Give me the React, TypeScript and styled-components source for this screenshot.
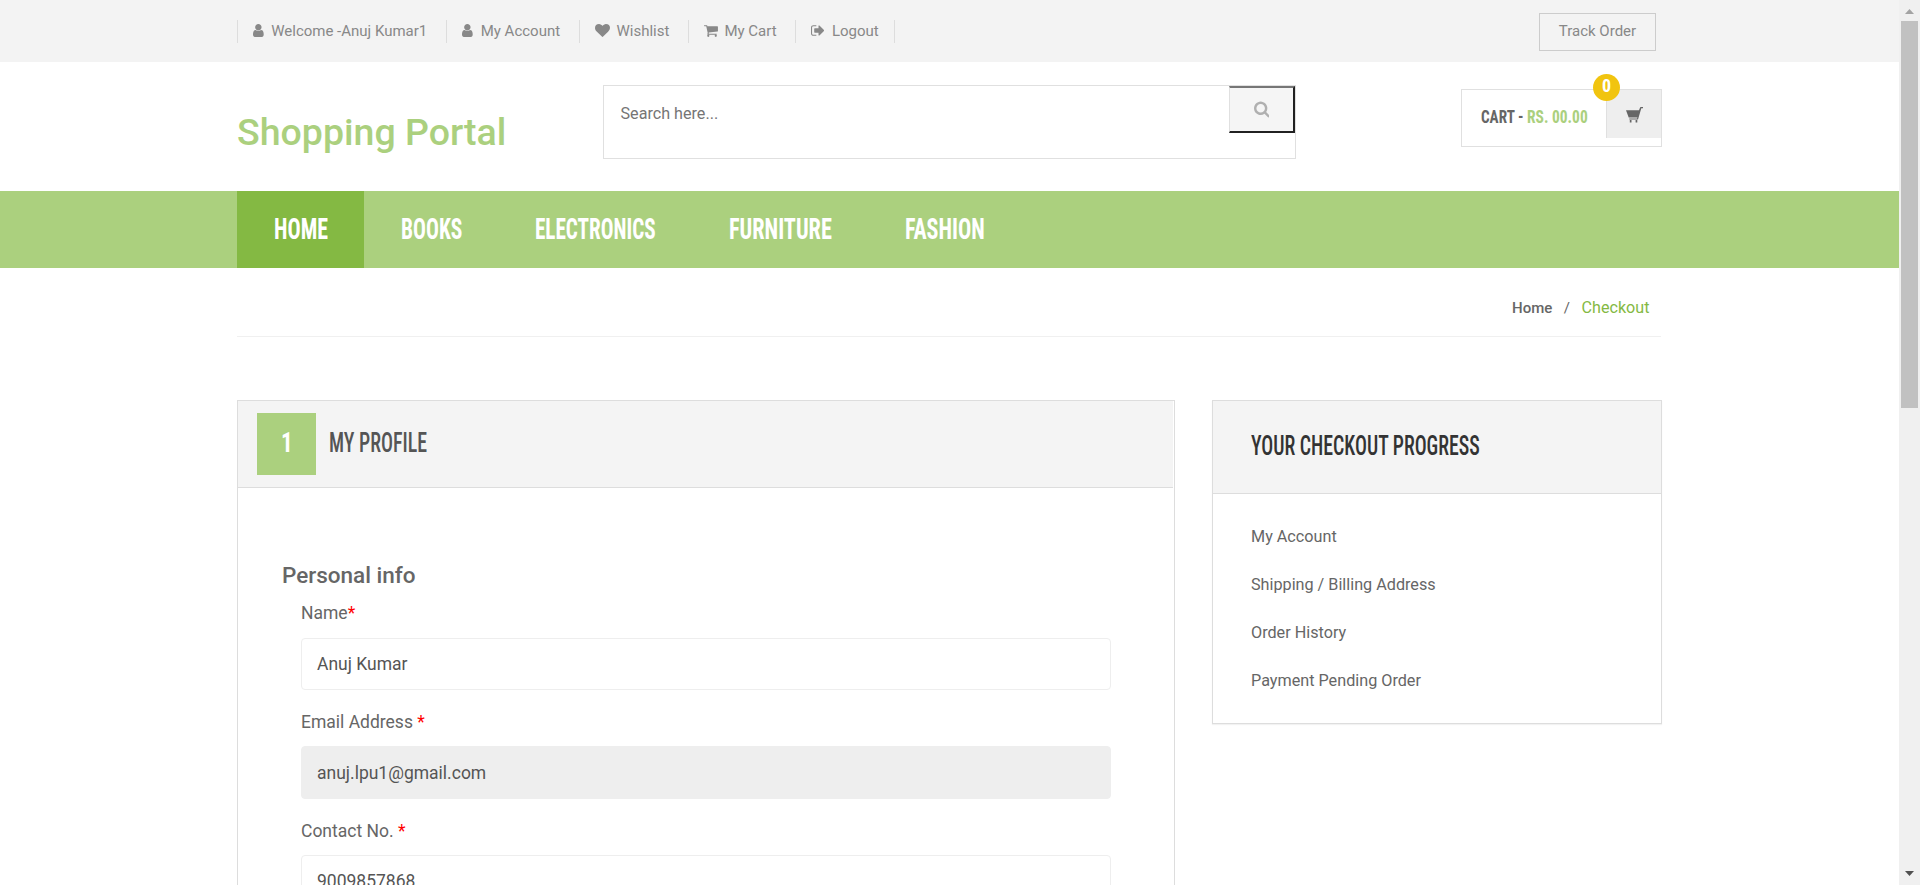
import React, { useLayoutEffect, useRef, useState } from "react";
import styled, { createGlobalStyle } from "styled-components";

const GlobalStyle = createGlobalStyle`
  *, *::before, *::after { box-sizing: border-box; }
  body { margin: 0; background: #fff; color: #666; font-family: Roboto, "Liberation Sans", sans-serif; overflow: hidden; }
  h2, h3 { margin: 0; font-weight: 500; }
  ul { margin: 0; padding: 0; list-style: none; }
`;

const Shell = styled.div`
  display: flex;
  width: 1920px;
  height: 885px;
  overflow: hidden;
`;
const Page = styled.div`
  flex: 1;
  height: 885px;
  overflow: hidden;
`;
const Container = styled.div`
  width: 1425px;
  margin-left: 237px;
  display: flex;
`;

/* Condensed display type, fitted to a set width */
const FitBox = styled.span<{ $w: number }>`
  display: inline-block;
  width: ${(p) => p.$w}px;
  white-space: nowrap;
`;
const FitText = styled.span<{ $size: number; $weight: number }>`
  display: inline-block;
  font-family: Roboto, "Liberation Sans", sans-serif;
  font-stretch: 75%;
  font-size: ${(p) => p.$size}px;
  font-weight: ${(p) => p.$weight};
  transform-origin: 0 50%;
`;
function Condensed({ w, size, weight = 700, children }: { w: number; size: number; weight?: number; children: string }) {
  const ref = useRef<HTMLSpanElement>(null);
  const [scale, setScale] = useState(1);
  useLayoutEffect(() => {
    if (ref.current) setScale(w / ref.current.offsetWidth);
  }, [w, size, weight, children]);
  return (
    <FitBox $w={w}>
      <FitText ref={ref} $size={size} $weight={weight} style={{ transform: `scaleX(${scale})` }}>
        {children}
      </FitText>
    </FitBox>
  );
}

const TopBar = styled.div`
  height: 62px;
  background: #f3f3f3;
`;
const TopInner = styled(Container)`
  height: 62px;
  align-items: center;
  justify-content: space-between;
  padding-right: 6px;
`;
const TopLinks = styled.ul`
  display: flex;
  margin-top: 1px;
  border-left: 1px solid #ddd;
`;
const TopLink = styled.li<{ $w: number; $gap: number }>`
  display: flex;
  align-items: center;
  gap: ${(p) => p.$gap}px;
  width: ${(p) => p.$w}px;
  height: 23px;
  padding: 0 0 2px 15px;
  border-right: 1px solid #ddd;
  font-size: 15px;
  line-height: 22px;
  color: #888;
  white-space: nowrap;
`;
const TrackButton = styled.a`
  width: 117px;
  height: 38px;
  margin-top: 2px;
  border: 1px solid #ccc;
  font-size: 15px;
  line-height: 34px;
  text-align: center;
  color: #888;
`;

const Header = styled(Container)`
  height: 129px;
`;
const Logo = styled.h2`
  width: 366px;
  margin-top: 50px;
  font-size: 37.5px;
  line-height: 40px;
  color: #abd07e;
`;
const SearchBox = styled.div`
  display: flex;
  justify-content: space-between;
  width: 693px;
  height: 74px;
  margin-top: 23px;
  padding-left: 16.5px;
  border: 1px solid #e0e0e0;
  font-size: 16.150px;
  line-height: 55px;
  color: #757575;
`;
const SearchButton = styled.button`
  display: flex;
  align-items: center;
  justify-content: center;
  width: 66px;
  height: 47px;
  padding: 0;
  background: #f5f5f5;
  border-style: solid;
  border-width: 2px 2px 2px 1px;
  border-color: #767676 #212121 #212121 #e0e0e0;
  color: #b0b0b0;
`;
const Cart = styled.div`
  position: relative;
  display: flex;
  justify-content: space-between;
  width: 201px;
  height: 58px;
  margin: 27px 0 0 165px;
  padding-left: 19px;
  border: 1px solid #e0e0e0;
`;
const CartText = styled.div`
  display: flex;
  gap: 4px;
  line-height: 54px;
  color: #666;
`;
const Price = styled.span`
  color: #abd07e;
`;
const CartButton = styled.div`
  width: 55px;
  height: 48px;
  padding: 17px 0 0 18.5px;
  background: #eee;
  border-left: 1px solid #e0e0e0;
`;
const Badge = styled.span`
  position: absolute;
  top: -16px;
  left: 131px;
  width: 27px;
  height: 27px;
  border-radius: 50%;
  background: #f1c40f;
  color: #fff;
  line-height: 23px;
  text-align: center;
`;

const NavBar = styled.nav`
  height: 77px;
  background: #abd07e;
`;
const NavItem = styled.a<{ $active?: boolean }>`
  height: 77px;
  padding: 0 36.5px;
  line-height: 75px;
  color: #fff;
  background: ${(p) => (p.$active ? "#84b943" : "transparent")};
`;

const Breadcrumb = styled(Container)`
  width: 1424px;
  height: 69px;
  justify-content: flex-end;
  padding-right: 11.5px;
  border-bottom: 1px solid #f0f0f0;
  line-height: 79px;
  font-size: 16.150px;
  color: #84b943;
`;
const Crumb = styled.span`
  font-size: 15px;
  font-weight: 500;
  line-height: 80px;
  color: #666;
`;
const Slash = styled.span`
  margin: 0 11.5px;
  font-size: 15px;
  line-height: 80px;
  color: #666;
`;

const Main = styled(Container)`
  margin-top: 63px;
  align-items: flex-start;
  justify-content: space-between;
`;
const Profile = styled.section`
  width: 938px;
  height: 600px;
  border: 1px solid #ddd;
  padding-right: 1px;
`;
const ProfileHead = styled.div`
  display: flex;
  height: 87px;
  padding: 12px 0 0 19px;
  background: #f4f4f4;
  border-bottom: 1px solid #ddd;
  line-height: 61px;
  color: #555;
`;
const Step = styled.span`
  width: 59px;
  height: 62px;
  margin-right: 13px;
  background: #abd07e;
  color: #fff;
  text-align: center;
`;
const Form = styled.div`
  padding: 71px 62px 0 63px;
`;
const FormTitle = styled.h3`
  margin-left: -19px;
  font-size: 22.5px;
  line-height: 32px;
`;
const Label = styled.div<{ $gap: number; $h?: number }>`
  margin-top: ${(p) => p.$gap}px;
  height: ${(p) => p.$h ?? 37}px;
  font-size: 17.5px;
  line-height: 26px;
`;
const Required = styled.span`
  color: red;
`;
const Field = styled.div<{ $disabled?: boolean }>`
  height: ${(p) => (p.$disabled ? 53 : 52)}px;
  padding-left: 15px;
  border: 1px solid #eee;
  border-radius: 4px;
  background: ${(p) => (p.$disabled ? "#eee" : "#fff")};
  font-size: 17.5px;
  line-height: ${(p) => (p.$disabled ? 52 : 50)}px;
  color: #555;
`;

const Progress = styled.aside`
  width: 450px;
  height: 324px;
  border: 1px solid #ddd;
  box-shadow: 0 1px 1px rgba(0, 0, 0, 0.05);
`;
const ProgressHead = styled.div`
  height: 93px;
  padding-left: 38px;
  background: #f4f4f4;
  border-bottom: 1px solid #ddd;
  line-height: 91px;
  color: #333;
`;
const ProgressList = styled.ul`
  padding: 19px 0 0 38px;
  font-size: 16.200px;
  line-height: 48px;
`;

const ScrollTrack = styled.div`
  display: flex;
  flex-direction: column;
  align-items: center;
  width: 21px;
  height: 885px;
  background: #f0f0f0;
`;
const Thumb = styled.div`
  width: 17px;
  height: 387px;
  margin: 7px 0 463px;
  background: #c1c1c1;
`;
const Arrow = styled.svg`
  display: block;
  flex: none;
`;
const ArrowTop = styled(Arrow)`
  margin-top: 9px;
`;

const paths = {
  user: { box: "256 0 1280 1792", w: 1280, d: "M1536 1399q0 109-62.5 187t-150.5 78h-854q-88 0-150.5-78t-62.5-187q0-85 8.5-160.5t31.5-152 58.5-131 94-89 134.5-34.5q131 128 313 128t313-128q76 0 134.5 34.5t94 89 58.5 131 31.5 152 8.5 160.5zm-256-887q0 159-112.5 271.5t-271.5 112.5-271.5-112.5-112.5-271.5 112.5-271.5 271.5-112.5 271.5 112.5 112.5 271.5z" },
  heart: { box: "0 0 1792 1792", w: 1792, d: "M896 1664q-26 0-44-18l-624-602q-10-8-27.5-26t-55.5-65.5-68-97.5-53.5-121-23.5-138q0-220 127-344t351-124q62 0 126.5 21.5t120 58 95.5 68.5 76 68q36-36 76-68t95.5-68.5 120-58 126.5-21.5q224 0 351 124t127 344q0 221-229 450l-623 600q-18 18-44 18z" },
  cart: { box: "64 0 1664 1792", w: 1664, d: "M704 1536q0 52-38 90t-90 38-90-38-38-90 38-90 90-38 90 38 38 90zm896 0q0 52-38 90t-90 38-90-38-38-90 38-90 90-38 90 38 38 90zm128-1088v512q0 24-16.5 42.5t-40.5 21.5l-1044 122q13 60 13 70 0 16-24 64h920q26 0 45 19t19 45-19 45-45 19h-1024q-26 0-45-19t-19-45q0-11 8-31.5t16-36 21.5-40 15.5-29.5l-177-823h-204q-26 0-45-19t-19-45 19-45 45-19h256q16 0 28.5 6.5t19.5 15.5 13 24.5 8 26 5.5 29.5 4.5 26h1201q26 0 45 19t19 45z" },
  logout: { box: "64 0 1600 1792", w: 1600, d: "M704 1440q0 4 1 20t.5 26.5-3 23.5-10 19.5-20.5 6.5h-320q-119 0-203.5-84.5t-84.5-203.5v-704q0-119 84.5-203.5t203.5-84.5h320q13 0 22.5 9.5t9.5 22.5q0 4 1 20t.5 26.5-3 23.5-10 19.5-20.5 6.5h-320q-66 0-113 47t-47 113v704q0 66 47 113t113 47h312l11.5 1 11.5 3 8 5.5 7 9 2 13.5zm928-544q0 26-19 45l-544 544q-19 19-45 19t-45-19-19-45v-288h-448q-26 0-45-19t-19-45v-384q0-26 19-45t45-19h448v-288q0-26 19-45t45-19 45 19l544 544q19 19 19 45z" },
  search: { box: "64 64 1664 1792", w: 1664, d: "M1216 832q0-185-131.5-316.5t-316.5-131.5-316.5 131.5-131.5 316.5 131.5 316.5 316.5 131.5 316.5-131.5 131.5-316.5zm512 832q0 52-38 90t-90 38q-54 0-90-38l-343-342q-179 124-399 124-143 0-273.5-55.5t-225-150-150-225-55.5-273.5 55.5-273.5 150-225 225-150 273.5-55.5 273.5 55.5 225 150 150 225 55.5 273.5q0 220-124 399l343 343q37 37 37 90z" },
};
function Icon({ name, size = 15 }: { name: keyof typeof paths; size?: number }) {
  const p = paths[name];
  return (
    <svg width={(size * p.w) / 1792} height={size} viewBox={p.box} fill="currentColor">
      <path d={p.d} />
    </svg>
  );
}

const links: { icon: keyof typeof paths; text: string; w: number; gap: number }[] = [
  { icon: "user", text: "Welcome -Anuj Kumar1", w: 209, gap: 7.5 },
  { icon: "user", text: "My Account", w: 133, gap: 8 },
  { icon: "heart", text: "Wishlist", w: 109, gap: 6.5 },
  { icon: "cart", text: "My Cart", w: 107, gap: 6.5 },
  { icon: "logout", text: "Logout", w: 99, gap: 7.5 },
];
const nav: [string, number][] = [
  ["HOME", 54],
  ["BOOKS", 61.5],
  ["ELECTRONICS", 120.5],
  ["FURNITURE", 103],
  ["FASHION", 80],
];

export default function App() {
  return (
    <Shell>
      <GlobalStyle />
      <Page>
        <TopBar>
          <TopInner>
            <TopLinks>
              {links.map((l) => (
                <TopLink key={l.text} $w={l.w} $gap={l.gap}>
                  <Icon name={l.icon} />
                  {l.text}
                </TopLink>
              ))}
            </TopLinks>
            <TrackButton>Track Order</TrackButton>
          </TopInner>
        </TopBar>
        <Header>
          <Logo>Shopping Portal</Logo>
          <SearchBox>
            Search here...
            <SearchButton aria-label="Search">
              <Icon name="search" size={17} />
            </SearchButton>
          </SearchBox>
          <Cart>
            <CartText>
              <Condensed w={42} size={18}>CART -</Condensed>
              <Price>
                <Condensed w={61} size={18}>RS. 00.00</Condensed>
              </Price>
            </CartText>
            <CartButton>
              <svg width="17" height="17" viewBox="0 0 17 17" fill="#666">
                <path d="M0 3.2h13l1.1-2.6.6-.6H17v1.2h-1.7L12 12.600H3.300v-1.200h7.700l.4-1H2.700z" />
                <path d="M3.800 13h1.700v2.600H3.800zM9.600 13h1.700v2.600H9.600z" />
              </svg>
            </CartButton>
            <Badge>
              <Condensed w={9} size={18}>0</Condensed>
            </Badge>
          </Cart>
        </Header>
        <NavBar>
          <Container>
            {nav.map(([text, w], i) => (
              <NavItem key={text} $active={i === 0}>
                <Condensed w={w} size={30}>{text}</Condensed>
              </NavItem>
            ))}
          </Container>
        </NavBar>
        <Breadcrumb>
          <Crumb>Home</Crumb>
          <Slash>/</Slash>
          Checkout
        </Breadcrumb>
        <Main>
          <Profile>
            <ProfileHead>
              <Step>
                <Condensed w={12} size={27}>1</Condensed>
              </Step>
              <Condensed w={98} size={27} weight={500}>MY PROFILE</Condensed>
            </ProfileHead>
            <Form>
              <FormTitle>Personal info</FormTitle>
              <Label $gap={9} $h={38}>
                Name<Required>*</Required>
              </Label>
              <Field>Anuj Kumar</Field>
              <Label $gap={19}>
                Email Address <Required>*</Required>
              </Label>
              <Field $disabled>anuj.lpu1@gmail.com</Field>
              <Label $gap={19}>
                Contact No. <Required>*</Required>
              </Label>
              <Field>9009857868</Field>
            </Form>
          </Profile>
          <Progress>
            <ProgressHead>
              <Condensed w={229} size={27} weight={500}>YOUR CHECKOUT PROGRESS</Condensed>
            </ProgressHead>
            <ProgressList>
              <li>My Account</li>
              <li>Shipping / Billing Address</li>
              <li>Order History</li>
              <li>Payment Pending Order</li>
            </ProgressList>
          </Progress>
        </Main>
      </Page>
      <ScrollTrack>
        <ArrowTop width="9" height="5" viewBox="0 0 9 5">
          <path d="M4.500 0L9 5H0z" fill="#a3a3a3" />
        </ArrowTop>
        <Thumb />
        <Arrow width="9" height="5" viewBox="0 0 9 5">
          <path d="M0 0h9L4.500 5z" fill="#505050" />
        </Arrow>
      </ScrollTrack>
    </Shell>
  );
}
